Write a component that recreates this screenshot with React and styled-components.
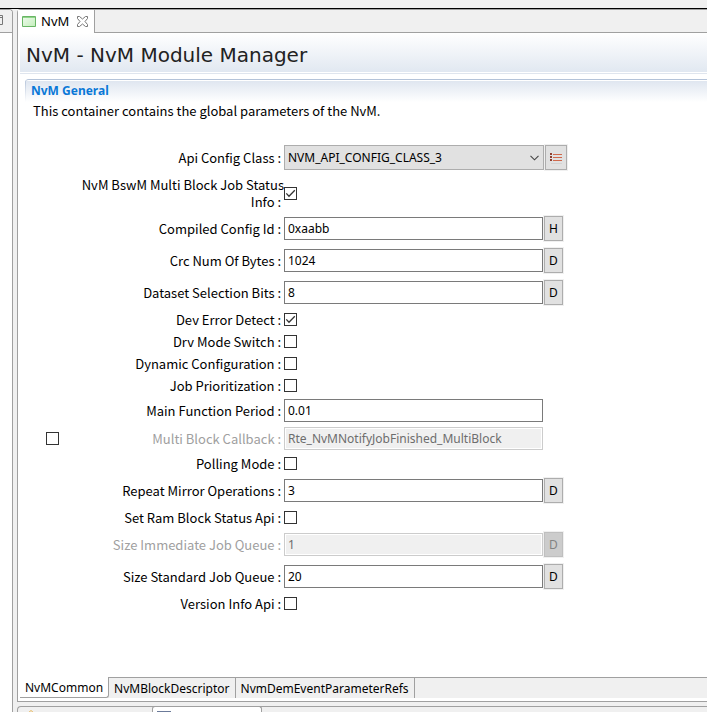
import React, { useState } from 'react';
import styled, { createGlobalStyle, css } from 'styled-components';

const GlobalStyle = createGlobalStyle`
  *, *::before, *::after { box-sizing: border-box; }
  body {
    margin: 0;
    background: #f0f0f0;
    color: #000;
    font: 12px/17px "Noto Sans", sans-serif;
  }
  button, input, select { font: inherit; color: inherit; margin: 0; }
`;

const line = '#a0a0a0';

const Workbench = styled.div`
  display: flex;
  flex-direction: column;
  min-height: 100vh;
`;

const TopStrip = styled.div`
  height: 9px;
  border-bottom: 1px solid #000;
`;

const Columns = styled.div`
  display: flex;
  flex: 1;
  gap: 4px;
`;

const SidePanel = styled.aside`
  display: flex;
  flex-direction: column;
  width: 13px;
  background: #fff;
  border-top: 1px solid ${line};
  border-right: 1px solid ${line};
  border-top-right-radius: 4px;
  overflow: hidden;
`;

const SideBar = styled.div`
  display: flex;
  align-items: flex-start;
  height: 23px;
  padding-top: 1px;
  background: #f0f0f0;
  border-bottom: 1px solid ${line};
`;

const MainColumn = styled.div`
  display: flex;
  flex: 1;
  flex-direction: column;
  gap: 4px;
  min-width: 0;
`;

const Editor = styled.main`
  display: flex;
  flex: 1;
  flex-direction: column;
  background: #fff;
  border: solid ${line};
  border-width: 1px 0 1px 1px;
  border-top-left-radius: 4px;
`;

const EditorTabs = styled.div`
  display: flex;
  height: 23px;

  &::after {
    content: "";
    flex: 1;
    background: #f0f0f0;
    border-bottom: 1px solid ${line};
  }
`;

const EditorTab = styled.div`
  display: flex;
  align-items: center;
  gap: 5px;
  padding: 0 6px 0 4px;
  background: #fff;
  border-right: 1px solid ${line};
`;

const EditorTabName = styled.span`
  width: 31px;
  font-size: 13px;
`;

const CloseButton = styled.button`
  display: flex;
  padding: 0;
  border: 0;
  background: none;
`;

const FormBody = styled.div`
  display: flex;
  flex: 1;
  flex-direction: column;
  padding-left: 2px;
`;

const FormHeader = styled.header`
  height: 41px;
  padding: 8px 6px;
  border-bottom: 1px solid #dfe5ee;
  background: linear-gradient(#fff, #e1e8f1) top / 100% 39px no-repeat;
`;

const FormTitle = styled.h1`
  margin: 0;
  color: #222;
  font: 20px/28px "DejaVu Sans", Verdana, sans-serif;
`;

const Section = styled.section`
  display: flex;
  flex-direction: column;
  margin: 5px 0 0 5px;
`;

const SectionTitle = styled.h2`
  height: 23px;
  margin: 0;
  padding: 2px 6px;
  border-top: 1px solid #b4c3d9;
  border-top-left-radius: 4px;
  background:
    linear-gradient(#b4c3d9, #fff) left / 1px 100% no-repeat,
    linear-gradient(#fff 1px, #dfe6f0 1px, #fff 22px);
  color: #0a78d7;
  font: bold 12px/17px "Noto Sans", sans-serif;
`;

const labelFont = '13px/17px "Noto Sans CJK SC", "Noto Sans", sans-serif';

const Description = styled.p`
  margin: 0;
  padding-left: 8px;
  font: ${labelFont};
`;

const Fields = styled.form`
  display: flex;
  flex-direction: column;
  gap: 5px;
  padding: 25px 12px 24px 21px;
`;

const Row = styled.div`
  display: grid;
  grid-template-columns: 34px minmax(0, 204px) minmax(0, 283px);
  align-items: center;
  min-height: ${(p) => ({ check: 17, text: 23, action: 27 })[p.$kind]}px;
`;

const Label = styled.label`
  grid-column: 2;
  font: ${labelFont};
  text-align: right;
  color: ${(p) => (p.$off ? '#a0a0a0' : 'inherit')};
`;

const Control = styled.div`
  display: flex;
  align-items: center;
  gap: 1px;
`;

const box = css`
  width: 100%;
  border-radius: 0;
  outline-offset: -1px;
`;

const TextBox = styled.input`
  ${box}
  flex: 0 1 259px;
  min-width: 0;
  height: 23px;
  padding: 0 3px;
  border: 1px solid #7a7a7a;
  background: #fff;

  &:disabled {
    border-color: #ccc;
    background: #f0f0f0;
    box-shadow: inset 0 0 0 1px #fff;
    color: #6d6d6d;
  }
`;

const SelectFrame = styled.div`
  display: grid;
  flex: 1;
  align-items: center;

  > * { grid-area: 1 / 1; }
  > svg { justify-self: end; margin-right: 5px; pointer-events: none; }
`;

const Select = styled.select`
  ${box}
  appearance: none;
  height: 25px;
  padding: 0 20px 0 3px;
  border: 1px solid #adadad;
  background: #e1e1e1;
`;

const SideButton = styled.button`
  display: flex;
  align-items: center;
  justify-content: center;
  width: ${(p) => (p.$wide ? 22 : 19)}px;
  height: 25px;
  padding: 0;
  border: 1px solid #adadad;
  background: #e1e1e1;
  box-shadow: 0 0 0 1px #f0f0f0;

  &:disabled {
    border-color: #bfbfbf;
    background: #ccc;
    color: #838383;
  }
`;

const CheckFrame = styled.span`
  display: grid;
  width: 13px;
  height: 13px;

  > * { grid-area: 1 / 1; }
  > svg { display: none; pointer-events: none; }
  > input:checked + svg { display: block; }
`;

const CheckInput = styled.input`
  appearance: none;
  width: 13px;
  height: 13px;
  border: 1px solid #333;
  background: #fff;
`;

const PageTabs = styled.div`
  display: flex;
  height: 24px;
  padding-left: 2px;
  border-bottom: 3px solid #fff;
  background: #f0f0f0;
  box-shadow: inset 2px 0 #fff;

  &::after {
    content: "";
    flex: 1;
    border-top: 1px solid ${line};
  }
`;

const PageTab = styled.button`
  padding: 0 5px;
  border: solid ${line};
  border-width: ${(p) => (p.$active ? '0 1px 1px 0' : '1px 1px 0 0')};
  border-bottom-right-radius: ${(p) => (p.$active ? 3 : 0)}px;
  background: ${(p) => (p.$active ? '#fff' : '#f0f0f0')};
  white-space: nowrap;
`;

const LowerPanel = styled.div`
  display: flex;
  height: 6px;
  border: solid ${line};
  border-width: 1px 0 0 1px;
  border-top-left-radius: 4px;
  overflow: hidden;
`;

const LowerTab = styled.div`
  display: flex;
  width: ${(p) => (p.$active ? 110 : 134)}px;
  padding: ${(p) => (p.$active ? '4px 0 0 4px' : '3px 0 0 9px')};

  ${(p) => p.$active && css`
    margin-top: -1px;
    border: solid ${line};
    border-width: 1px 1px 0;
    border-radius: 3px 3px 0 0;
    background: #fff;
  `}
`;

const Check = ({ id, checked, label }) => {
  const [on, setOn] = useState(Boolean(checked));
  return (
    <CheckFrame>
      <CheckInput
        type="checkbox"
        id={id}
        aria-label={label}
        checked={on}
        onChange={(e) => setOn(e.target.checked)}
      />
      <svg width="13" height="13" viewBox="0 0 13 13" fill="none" stroke="#333" strokeWidth="1.3">
        <path d="M2.3 6.4 5 9.2 10.8 3.3" />
      </svg>
    </CheckFrame>
  );
};

const Chevron = () => (
  <svg width="9" height="6" viewBox="0 0 9 6" fill="none" stroke="#444" strokeWidth="1.1">
    <path d="M.5.8 4.5 4.8 8.5.8" />
  </svg>
);

const ListIcon = () => (
  <svg width="14" height="12" viewBox="0 0 14 12">
    <path fill="#8f3f30" d="M1 1h2v2H1zM1 4h2v2H1zM1 7h2v2H1z" />
    <path fill="#d0694c" d="M4 2h9v1H4zM4 5h9v1H4zM4 8h9v1H4z" />
    <path fill="#d2d2d2" d="M2 11h11v1H2z" />
  </svg>
);

const ModuleIcon = () => (
  <svg width="14" height="11" viewBox="0 0 14 11">
    <defs>
      <linearGradient id="leaf" x1="0" y1="0" x2="1" y2="1">
        <stop offset="0" stopColor="#f0fbee" />
        <stop offset="1" stopColor="#c3eebb" />
      </linearGradient>
    </defs>
    <path fill="url(#leaf)" stroke="#69b565" d="M.5.5h13v10H.5z" />
    <path fill="#8fd489" d="M1 1h12v1H1z" />
  </svg>
);

const CloseIcon = () => (
  <svg width="11" height="11" viewBox="0 0 11 11" fill="#fff" stroke="#777" strokeWidth="1">
    <path d="M.5.5h2L5.500 3 8.500.5h2v2L8 5.500l2.500 3v2h-2L5.500 8l-3 2.500h-2v-2L3 5.500l-2.500-3z" />
  </svg>
);

const RestoreIcon = () => (
  <svg width="3" height="14" viewBox="0 0 3 14" fill="none" stroke="#777">
    <path d="M0 4.500h2.500v9H0M0 6.500h2" />
  </svg>
);

const fields = [
  { label: 'Api Config Class', kind: 'action', options: ['NVM_API_CONFIG_CLASS_1', 'NVM_API_CONFIG_CLASS_2', 'NVM_API_CONFIG_CLASS_3'] },
  { label: 'NvM BswM Multi Block Job Status Info', kind: 'check', checked: true },
  { label: 'Compiled Config Id', kind: 'action', value: '0xaabb', action: 'H' },
  { label: 'Crc Num Of Bytes', kind: 'action', value: '1024', action: 'D' },
  { label: 'Dataset Selection Bits', kind: 'action', value: '8', action: 'D' },
  { label: 'Dev Error Detect', kind: 'check', checked: true },
  { label: 'Drv Mode Switch', kind: 'check' },
  { label: 'Dynamic Configuration', kind: 'check' },
  { label: 'Job Prioritization', kind: 'check' },
  { label: 'Main Function Period', kind: 'text', value: '0.01' },
  { label: 'Multi Block Callback', kind: 'text', value: 'Rte_NvMNotifyJobFinished_MultiBlock', off: true, optional: true },
  { label: 'Polling Mode', kind: 'check' },
  { label: 'Repeat Mirror Operations', kind: 'action', value: '3', action: 'D' },
  { label: 'Set Ram Block Status Api', kind: 'check' },
  { label: 'Size Immediate Job Queue', kind: 'action', value: '1', action: 'D', off: true },
  { label: 'Size Standard Job Queue', kind: 'action', value: '20', action: 'D' },
  { label: 'Version Info Api', kind: 'check' },
];

const Field = ({ label, kind, value, action, options, checked, off, optional }) => {
  const id = label.replace(/ /g, '-').toLowerCase();
  return (
    <Row $kind={kind}>
      {optional && <Check label={`Enable ${label}`} />}
      <Label htmlFor={id} $off={off}>{`${label}\u00a0:\u00a0`}</Label>
      <Control>
        {kind === 'check' && <Check id={id} checked={checked} />}
        {options && (
          <>
            <SelectFrame>
              <Select id={id} defaultValue={options[2]}>
                {options.map((o) => <option key={o}>{o}</option>)}
              </Select>
              <Chevron />
            </SelectFrame>
            <SideButton type="button" $wide aria-label="Choose value"><ListIcon /></SideButton>
          </>
        )}
        {value && <TextBox id={id} type="text" defaultValue={value} disabled={off} />}
        {action && <SideButton type="button" disabled={off}>{action}</SideButton>}
      </Control>
    </Row>
  );
};

const pages = ['NvMCommon', 'NvMBlockDescriptor', 'NvmDemEventParameterRefs'];

export default function App() {
  const [page, setPage] = useState(pages[0]);
  return (
    <Workbench>
      <GlobalStyle />
      <TopStrip />
      <Columns>
        <SidePanel>
          <SideBar><RestoreIcon /></SideBar>
        </SidePanel>
        <MainColumn>
          <Editor>
            <EditorTabs>
              <EditorTab>
                <ModuleIcon />
                <EditorTabName>NvM</EditorTabName>
                <CloseButton aria-label="Close"><CloseIcon /></CloseButton>
              </EditorTab>
            </EditorTabs>
            <FormBody>
              <FormHeader>
                <FormTitle>NvM - NvM Module Manager</FormTitle>
              </FormHeader>
              <Section>
                <SectionTitle>NvM General</SectionTitle>
                <Description>This container contains the global parameters of the NvM.</Description>
                <Fields>
                  {fields.map((f) => <Field key={f.label} {...f} />)}
                </Fields>
              </Section>
            </FormBody>
            <PageTabs role="tablist">
              {pages.map((p) => (
                <PageTab
                  key={p}
                  role="tab"
                  aria-selected={p === page}
                  $active={p === page}
                  onClick={() => setPage(p)}
                >
                  {p}
                </PageTab>
              ))}
            </PageTabs>
          </Editor>
          <LowerPanel>
            <LowerTab>
              <svg width="8" height="3" viewBox="0 0 8 3" fill="none" stroke="#e8b75c">
                <path d="M1 3 4 .5 7 3" />
              </svg>
            </LowerTab>
            <LowerTab $active>
              <svg width="14" height="2" viewBox="0 0 14 2">
                <path fill="#6b7a99" d="M0 0h14v2H0z" />
              </svg>
            </LowerTab>
          </LowerPanel>
        </MainColumn>
      </Columns>
    </Workbench>
  );
}
